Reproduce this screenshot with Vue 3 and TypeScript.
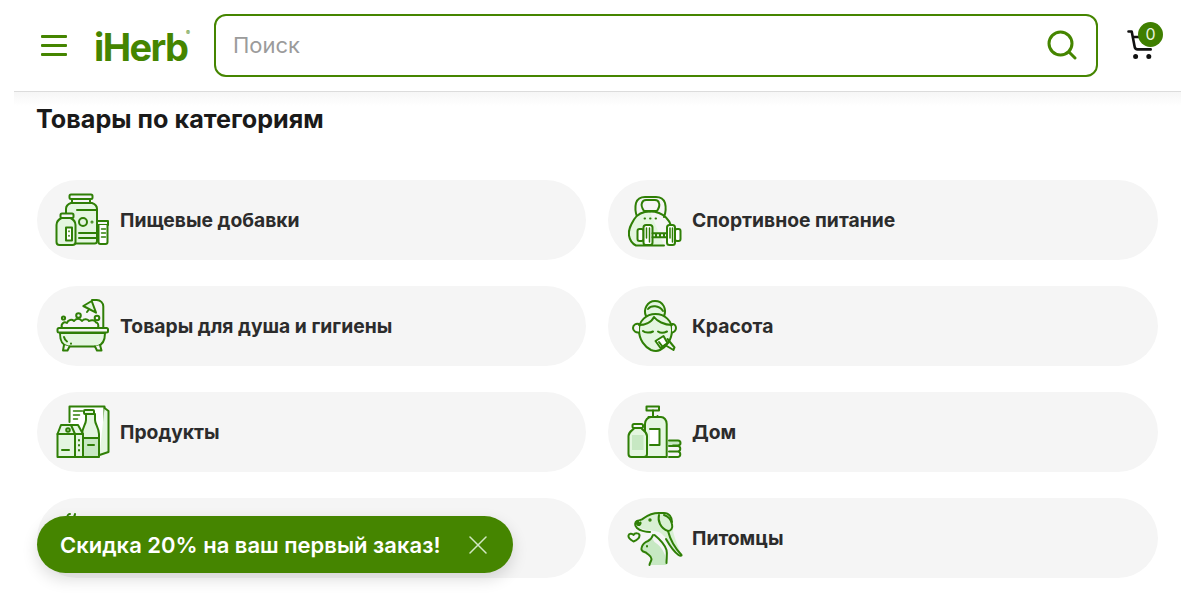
<script setup lang="ts">
interface Category {
  id: string
  label: string
}

const categories: Category[] = [
  { id: 'supplements', label: 'Пищевые добавки' },
  { id: 'sports', label: 'Спортивное питание' },
  { id: 'bath', label: 'Товары для душа и гигиены' },
  { id: 'beauty', label: 'Красота' },
  { id: 'grocery', label: 'Продукты' },
  { id: 'home', label: 'Дом' },
  { id: 'kids', label: '' },
  { id: 'pets', label: 'Питомцы' },
]
</script>

<template>
  <div class="page">
    <header class="header">
      <button class="menu" aria-label="Меню"><i></i><i></i><i></i></button>
      <div class="logo">iHerb<sup>®</sup></div>
      <div class="search">
        <input class="search-input" placeholder="Поиск" />
        <svg class="search-icon" viewBox="0 0 30 30" fill="none" stroke="#458500" stroke-width="3" stroke-linecap="round">
          <circle cx="13.500" cy="13.500" r="11.500" />
          <path d="M22 22l6 6" />
        </svg>
      </div>
      <div class="cart">
        <svg viewBox="0 0 28 30" fill="none" stroke="#111" stroke-width="2.600" stroke-linecap="round" stroke-linejoin="round">
          <path d="M1.500 1.500h3.200l3 15.500a3 3 0 0 0 3 2.400h13" />
          <path d="M7 7h5" />
          <circle cx="8.600" cy="26.600" r="1.200" fill="#111" />
          <circle cx="21.800" cy="26.600" r="1.200" fill="#111" />
        </svg>
        <span class="badge">0</span>
      </div>
    </header>

    <main class="content">
      <h2 class="title">Товары по категориям</h2>
      <div class="grid">
        <a v-for="c in categories" :key="c.id" class="card">
          <svg class="icon" viewBox="0 0 60 60" fill="none" stroke="#2f7f06" stroke-width="2" stroke-linecap="round" stroke-linejoin="round">
            <template v-if="c.id === 'supplements'">
              <rect x="17.500" y="4.500" width="23" height="4.500" rx="1.500" />
              <path d="M20 9v4M38 9v4" />
              <path d="M19 13c-3 1-5 3-5 6v32a2.500 2.500 0 0 0 2.500 2.500h26a2.500 2.500 0 0 0 2.500-2.500V19c0-3-2-5-5-6z" fill="#e4f6e0" />
              <path d="M25 20h20M27 43h18M27 48h17" />
              <circle cx="31" cy="32" r="4" />
              <circle cx="40" cy="32" r=".5" />
              <path d="M45 31h11v4H45z" />
              <path d="M46.500 35v17a2 2 0 0 0 2 2h5a2 2 0 0 0 2-2V35" fill="#fff" />
              <path d="M49.500 39h4M49.500 43h4M49.500 47h4" stroke-width="1.400" />
              <rect x="8.500" y="23.500" width="13" height="4.500" rx="1.500" fill="#f5f5f5" />
              <path d="M9.500 28c-3 1.500-5 3.500-5 7v17a3 3 0 0 0 3 3h13a3 3 0 0 0 3-3V35c0-3.500-2-5.500-5-7z" fill="#e4f6e0" />
              <path d="M14 37.500h6v13h-6z" fill="#fff" />
              <path d="M17 41v.6M17 45.500v.6" stroke-width="1.600" />
            </template>

            <template v-else-if="c.id === 'sports'">
              <path d="M14 27C12 21 12 17 13 13c1-3 4-6 9-6h11c5 0 8 3 9 6 1 4 1 9-1 14" />
              <path d="M21 21c-2-3-3-6-2-8 .6-2 2-3 4-3h9c2 0 3.500 1 4 3 .8 2 0 5-2 8z" />
              <path d="M27 21.500c-7 0-13 3-16 8-3 5-6 10-5 16 .7 4.500 3 8 7 10h28" fill="#e4f6e0" />
              <path d="M27 21.500c7 0 12 2 16 6 3 3 4 5 5 8" />
              <path d="M21.500 28.500h.6M27 28.500h.6M32.500 28.500h.6" stroke-width="1.800" />
              <rect x="14.500" y="39" width="6" height="12" rx="2" fill="#fff" />
              <rect x="20.500" y="35" width="9" height="20" rx="2.500" fill="#fff" />
              <path d="M29.500 43.300h14.500M29.500 47.300h14.500M33 43.300v4M37 43.300v4M41 43.300v4" />
              <rect x="44" y="35" width="8" height="20" rx="2.500" fill="#fff" />
              <rect x="52" y="39" width="5.500" height="12" rx="2" fill="#fff" />
              <path d="M23.500 38v10M26.500 38v14M47 38v10M49.500 38v14" stroke-width="1.500" />
            </template>

            <template v-else-if="c.id === 'bath'">
              <path d="M8 37c0 8 2 12 8 13.500h29c6-1.500 8-6 8-13.500z" fill="#e4f6e0" />
              <path d="M12 41c.5 2 1.500 3.500 3 4.500M19 47.500v.2" />
              <path d="M12 49l-1 5.500h4.500l2-4M43 50.500l2 4h4.500L48 49" fill="#f5f5f5" />
              <path d="M10 32c-1.500-4 2-7 5-5 1-3.500 5-4 7-2 2-3 6-3 8 0 2-2.500 6-2 7 0 2.500-1.500 6-1 7 1.500 1.500 0 3 2 2 5.500" />
              <rect x="5.500" y="32" width="50.500" height="4.500" rx="1.500" fill="#f5f5f5" />
              <circle cx="11.500" cy="22" r="1.600" />
              <circle cx="26.500" cy="19.500" r="2.300" />
              <circle cx="45" cy="22" r="2.300" />
              <path d="M51.300 32V10.500a6.500 6.500 0 0 0-6.500-6.500H40" />
              <path d="M31.300 10l8.400-5 4.300 11.700z" fill="#e4f6e0" />
              <path d="M35 16l1.500-2" />
            </template>

            <template v-else-if="c.id === 'beauty'">
              <path d="M23 20c-3-6 1-15 9-15s12 8 9 15" fill="#e4f6e0" />
              <path d="M25 13c3-4 11-4 15 2" />
              <path d="M16 34c0-9 7-16 16.500-16S49 25 49 34c0 10-6 17-12 20-3 1.500-6 1-9 0-6-3-12-10-12-20z" fill="#e4f6e0" />
              <path d="M16 28c-3-1-6 1-6 4s3 5 6 4.500M49 28c2-.5 4 1.500 4 4s-2 4.500-4 4.500" fill="#f5f5f5" />
              <path d="M16 29c5 0 12-2 15-8 3 4 10 8 18 8" />
              <path d="M20 35c2 2 7 2 10 .5M35 35.500c2 1.500 6 1.500 9 0" />
              <path d="M32.500 45l8-5 4 7-7 5z" fill="#fff" />
              <path d="M42 49l8.500 5 1-2.500-7-8.500M36 46l3 4" />
            </template>

            <template v-else-if="c.id === 'grocery'">
              <path d="M17.500 20V4.500h35V51" fill="#fff" />
              <path d="M52.500 6l4 3v41l-9 3" fill="#e4f6e0" />
              <path d="M21.500 9h9M21.500 13h6M21.500 17h4" stroke-width="1.500" />
              <rect x="32" y="8" width="10" height="4" rx="1" fill="#e4f6e0" />
              <path d="M34 12v6c0 4-4 8-4 14v21a2 2 0 0 0 2 2h13a2 2 0 0 0 2-2V32c0-6-4-10-4-14v-6z" fill="#e4f6e0" />
              <path d="M30 36h17v19H32a2 2 0 0 1-2-2z" fill="#c7e8c3" />
              <path d="M36 43h6" />
              <path d="M9 23h17l5 9v23H5.500V32z" fill="#e4f6e0" />
              <path d="M5.500 32h25.500M19 23l4 9v23" />
              <circle cx="16" cy="28" r="1.800" />
              <path d="M10 48h7M27 38v.5M27 43v.5M27 48v.5" />
            </template>

            <template v-else-if="c.id === 'home'">
              <path d="M23.500 4.500h12.500v4H23.500z" />
              <path d="M30 8.500V15" />
              <path d="M25.500 15h9v-1" />
              <path d="M22 22c0-4 3-7 6-7h10c3 0 5.700 3 5.700 7v33H22z" fill="#e4f6e0" />
              <path d="M27 27h9.500v16H27" fill="#fff" />
              <rect x="9.500" y="22" width="10.500" height="4" rx="1.500" fill="#f5f5f5" />
              <path d="M11 26c0 2-5.500 3-5.500 8v18a3 3 0 0 0 3 3H21a3 3 0 0 0 3-3V34c0-5-5.500-6-5.500-8z" fill="#e4f6e0" />
              <path d="M9 33h11.500v15H9z" fill="#c7e8c3" stroke="none" />
              <path d="M45 39h9.500a2.500 2.500 0 0 1 0 5H45" fill="#c7e8c3" stroke="none" />
              <path d="M46 38.500h9a2.500 2.500 0 0 1 0 5H50M46 44h9a2.800 2.800 0 0 1 0 5.500h-9M46 49.500h9a2.800 2.800 0 0 1 0 5.500h-9" />
            </template>

            <template v-else-if="c.id === 'kids'">
              <path d="M15 10c0-3 2-4 3-4M20 10c2-1 3-2 3-4" />
              <circle cx="20" cy="24" r="11" fill="#e4f6e0" />
            </template>

            <template v-else>
              <path d="M26 22c-4 0-10-2-13-4 2-4 5-6 9-9 4-3 8-4 13-4h5c5 0 9 5 9 10 0 6 2 14 9 31l-1 1c-6-3-14-20-21-23z" fill="#d8f0d3" stroke="none" />
              <path d="M27 24c-3 0-10-1-13-4-3-3-2-6 0-7 3-1 5-1 7-3 4-3 9-5 15-5h5c5 0 8 4 8 9" />
              <path d="M36 7c-1 4 0 7 1 9 2 4 5 6 8 7 3 0 5-3 4-7-1-5-5-8-8-9" fill="#d8f0d3" />
              <path d="M45 23c2 8 7 17 13.500 24 .5 1-1.500 1-3 0C50 43 47 38 43 31" />
              <path d="M15 13.500c-1.500 1-1.500 3 0 3.500s3-1 2.500-2.500" fill="#2f7f06" />
              <circle cx="27" cy="12" r=".7" />
              <path d="M26.500 33c-4 1-7 3-8 7 1 2 3 3 5 4 1 2 4 3 5 7l-2 6h17c0-9-3-17-12-23l-2-3z" fill="#c7e8c3" stroke="none" />
              <path d="M30 27c-1 3-3 5-5 6-3 1-6 4-6.500 7-.5 1.500 0 2 1 3s3 1 4 2c2 2 5 3 5 6 0 2-2 4-2 6" />
              <path d="M31.500 27c5 4 10 9 12 15 1 4 0 8 0 13" />
              <path d="M24 38v.4" />
              <path d="M10.500 33.500C7 31.500 5 29.500 5.500 27.500 6 25.500 9 25 10.500 27c1.500-2.500 6-2 6 .5 0 2.500-3.500 5-6 6z" />
            </template>
          </svg>
          <span v-if="c.label" class="label">{{ c.label }}</span>
        </a>
      </div>
    </main>

    <div class="toast">
      <span class="toast-text">Скидка 20% на ваш первый заказ!</span>
      <svg class="toast-close" viewBox="0 0 18 18" fill="none" stroke="#d3e8c4" stroke-width="1.500" stroke-linecap="round">
        <path d="M1 1l16 16M17 1L1 17" />
      </svg>
    </div>
  </div>
</template>

<style>
html,
body {
  margin: 0;
  background: #fff;
}
</style>

<style scoped>
.page {
  position: relative;
  width: 1200px;
  height: 595px;
  overflow: hidden;
  background: #fff;
  font-family: Inter, "Liberation Sans", sans-serif;
}

.header {
  position: relative;
  box-sizing: border-box;
  display: flex;
  align-items: center;
  height: 92px;
  margin: 0 19px 0 14px;
  padding: 0 0 1px 27px;
  border-bottom: 1px solid #dcdcdc;
}

.header::after {
  content: "";
  position: absolute;
  left: 0;
  right: 0;
  top: 92px;
  height: 14px;
  background: linear-gradient(#f6f6f6, #fff);
}

.menu {
  display: flex;
  flex-direction: column;
  gap: 6px;
  width: 26px;
  padding: 0;
  border: 0;
  background: none;
}

.menu i {
  display: block;
  height: 3px;
  border-radius: 1px;
  background: #458500;
}

.logo {
  position: relative;
  width: 93px;
  margin-left: 27px;
  padding-top: 3px;
  color: #458500;
  font-family: Inter, Roboto, sans-serif;
  font-size: 38px;
  font-weight: 700;
  letter-spacing: -1.600px;
  line-height: 44px;
}

.logo sup {
  position: absolute;
  top: 8px;
  left: 92px;
  font-size: 6px;
  font-weight: 400;
  line-height: 6px;
  letter-spacing: 0;
}

.search {
  box-sizing: border-box;
  display: flex;
  align-items: center;
  width: 884px;
  height: 63px;
  margin-left: 27px;
  padding: 0 19px 0 17px;
  border: 2px solid #458500;
  border-radius: 12px;
}

.search-input {
  flex: 1;
  min-width: 0;
  padding: 0;
  border: 0;
  outline: 0;
  background: transparent;
  font-family: inherit;
  font-size: 22px;
  color: #222;
}

.search-input::placeholder {
  color: #9b9b9b;
  opacity: 1;
}

.search-icon {
  width: 30px;
  height: 30px;
}

.cart {
  position: relative;
  width: 28px;
  height: 30px;
  margin-left: 29px;
}

.cart svg {
  display: block;
  width: 28px;
  height: 30px;
}

.badge {
  position: absolute;
  top: -8px;
  left: 11px;
  width: 25px;
  height: 25px;
  border-radius: 50%;
  background: #3f7f00;
  color: #e8f3df;
  font-size: 16px;
  line-height: 25px;
  text-align: center;
}

.content {
  position: relative;
  padding: 0 42px 0 37px;
}

.title {
  margin: 11px 0 0 -1px;
  color: #1a1a1a;
  font-size: 25.200px;
  font-weight: 700;
  line-height: 32px;
}

.grid {
  display: grid;
  grid-template-columns: 549px 550px;
  column-gap: 22px;
  row-gap: 26px;
  margin-top: 45px;
}

.card {
  display: flex;
  align-items: center;
  gap: 8px;
  height: 80px;
  padding-left: 15px;
  border-radius: 40px;
  background: #f5f5f5;
}

.card:nth-child(even) .label {
  margin-left: 1px;
}

.icon {
  flex: none;
  width: 60px;
  height: 60px;
}

.label {
  color: #2c2c2c;
  font-size: 19.300px;
  font-weight: 700;
}

.toast {
  position: absolute;
  left: 37px;
  top: 516px;
  box-sizing: border-box;
  display: flex;
  align-items: center;
  justify-content: space-between;
  width: 476px;
  height: 57px;
  padding: 0 26px 0 23px;
  border-radius: 28.500px;
  background: #458500;
  box-shadow: 0 6px 16px rgba(0, 0, 0, 0.14);
}

.toast-text {
  color: #fff;
  font-size: 22px;
  font-weight: 600;
  white-space: nowrap;
}

.toast-close {
  width: 18px;
  height: 18px;
}
</style>
